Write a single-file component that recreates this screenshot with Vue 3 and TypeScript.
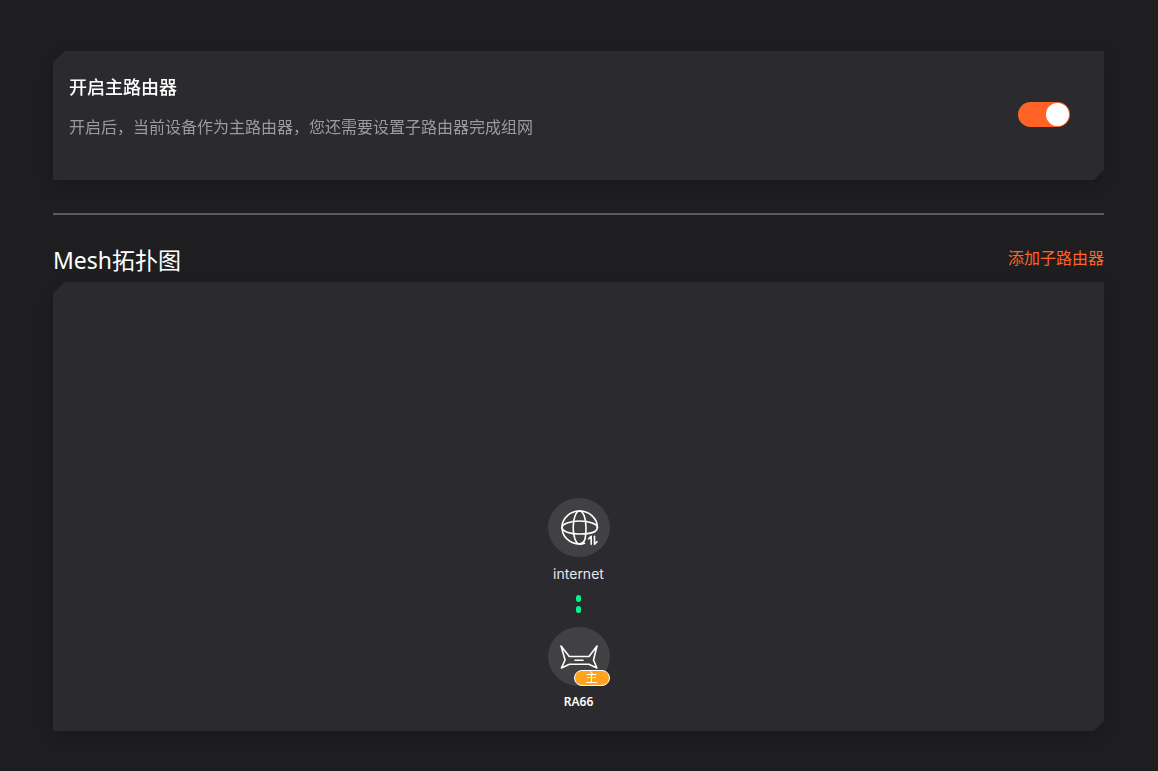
<script setup lang="ts">
import { ref } from 'vue'

const mainRouter = ref<boolean>(true)
const deviceName = 'RA66'
</script>

<template>
  <main class="page">
    <div class="shadow">
      <section class="card setting">
        <div class="setting-text">
          <h2 id="main-router-title">开启主路由器</h2>
          <p id="main-router-desc">开启后，当前设备作为主路由器，您还需要设置子路由器完成组网</p>
        </div>
        <input
          v-model="mainRouter"
          class="switch"
          type="checkbox"
          role="switch"
          aria-labelledby="main-router-title"
          aria-describedby="main-router-desc"
        />
      </section>
    </div>

    <hr class="divider" />

    <header class="heading">
      <h1>Mesh拓扑图</h1>
      <a href="#add">添加子路由器</a>
    </header>

    <div class="shadow grow">
      <section class="card topology">
        <div class="node">
          <div class="disc">
            <svg viewBox="0 0 62 59" aria-hidden="true">
              <g fill="none" stroke="#fff" stroke-width="1.6" stroke-linecap="round" stroke-linejoin="round">
                <path d="M36.500 45.200C34.900 45.700 33.300 46 31.600 46C21.900 46 14 38.600 14 29.500C14 20.400 21.900 13 31.600 13C41.300 13 49.400 20.400 49.400 29.500Q49.400 32 47 33.500" />
                <path d="M47 33.500C43.500 35.400 37.500 36 31.600 36C21.900 36 14 33.200 14 29.500C14 25.900 21.900 23 31.600 23C41.300 23 49.400 25.900 49.400 29.500" />
                <path d="M36.500 42.500C35.300 44.700 33.900 46 31.600 46C28 46 25.200 38.600 25.200 29.500C25.200 20.400 28 13 31.600 13C35.200 13 38 20.400 38 29.500C38 35 37.700 39.500 36.500 42.500" />
                <path d="M40.600 40.800L43.200 38.300V46.200M46.500 38.300V46.200L49 43.700" />
              </g>
            </svg>
          </div>
          <span class="net-name">internet</span>
        </div>

        <div class="link" aria-hidden="true"><i></i><i></i></div>

        <div class="node">
          <div class="disc">
            <svg viewBox="0 0 62 59" aria-hidden="true">
              <g fill="none" stroke="#fff" stroke-width="1.6" stroke-linecap="round" stroke-linejoin="round">
                <path d="M13 19L21.300 29.500H41L49 19L45.500 33L48.900 41L40.800 37.300H21.500L13.400 41L17.100 33Z" />
                <path d="M27 33.300H35" />
              </g>
            </svg>
            <span class="badge">主</span>
          </div>
          <span class="device-name">{{ deviceName }}</span>
        </div>
      </section>
    </div>
  </main>
</template>

<style>
body {
  margin: 0;
  background: #1e1e20;
}
</style>

<style scoped>
.page {
  box-sizing: border-box;
  min-height: 100vh;
  padding: 51px 54px 40px 53px;
  display: flex;
  flex-direction: column;
  background: #1e1e20;
  color: #fff;
  font-family: "Noto Sans", "Noto Sans CJK SC", sans-serif;
}
.shadow {
  filter: drop-shadow(0 6px 8px rgba(0, 0, 0, 0.16));
}
.grow {
  flex: 1;
  display: flex;
}
.card {
  box-sizing: border-box;
  background: #2b2a2e;
  clip-path: polygon(12px 0, 100% 0, 100% calc(100% - 10px), calc(100% - 10px) 100%, 0 100%, 0 11px);
}
.setting {
  display: flex;
  justify-content: space-between;
  align-items: flex-start;
  padding: 24px 34px 41px 16px;
}
h1,
h2,
p {
  margin: 0;
  font-weight: 400;
}
h2 {
  font-size: 18px;
  line-height: 24px;
  font-weight: 500;
}
p {
  margin-top: 16px;
  font-size: 16px;
  line-height: 24px;
  color: #9b9b9d;
}
.switch {
  appearance: none;
  box-sizing: border-box;
  flex: none;
  width: 52px;
  height: 25px;
  margin: 27px 0 0;
  padding: 1px;
  border-radius: 13px;
  background: #59595c;
  display: flex;
  cursor: pointer;
}
.switch::before {
  content: "";
  width: 23px;
  height: 23px;
  border-radius: 50%;
  background: #fff;
}
.switch:checked {
  background: #ff6326;
  justify-content: flex-end;
}
.divider {
  width: 100%;
  height: 2px;
  margin: 33px 0 30px;
  border: 0;
  background: #5b5b5c;
}
.heading {
  display: flex;
  justify-content: space-between;
  align-items: flex-start;
  margin-bottom: 7px;
}
h1 {
  font-size: 23px;
  line-height: 30px;
}
a {
  font-size: 16px;
  line-height: 26px;
  color: #ff6326;
  text-decoration: none;
}
.topology {
  flex: 1;
  display: flex;
  flex-direction: column;
  align-items: center;
  justify-content: flex-end;
  padding: 200px 16px 21px;
}
.node {
  display: flex;
  flex-direction: column;
  align-items: center;
}
.disc {
  position: relative;
  width: 62px;
  height: 59px;
  border-radius: 50%;
  background: #414143;
}
.disc svg {
  display: block;
  width: 100%;
  height: 100%;
}
.badge {
  position: absolute;
  right: 0;
  bottom: 0;
  box-sizing: border-box;
  width: 36px;
  height: 16px;
  border: 1px solid #fff;
  border-radius: 8px;
  background: #ffa41c;
  font-size: 12px;
  line-height: 14px;
  text-align: center;
}
.net-name {
  margin-top: 8px;
  font-family: Inter, sans-serif;
  font-size: 14px;
  line-height: 18px;
  color: #e8e8e8;
}
.link {
  display: flex;
  flex-direction: column;
  gap: 4px;
  margin: 12px 0 14px;
}
.link i {
  width: 5px;
  height: 7px;
  border-radius: 3px;
  background: #00f58c;
}
.device-name {
  margin-top: 8px;
  font-size: 12px;
  line-height: 16px;
  font-weight: 600;
}
</style>
